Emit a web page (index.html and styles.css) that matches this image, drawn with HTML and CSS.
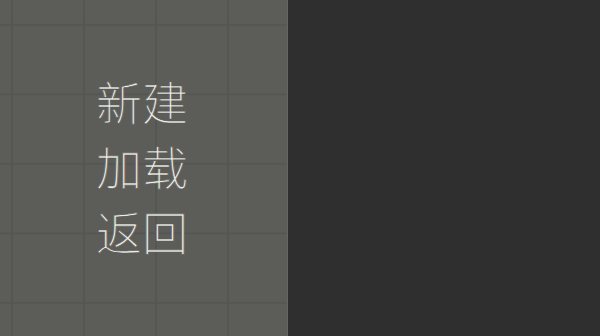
FILE: index.html
```html
<!DOCTYPE html>
<html lang="zh">
<head>
<meta charset="utf-8">
<link rel="stylesheet" href="styles.css">
</head>
<body>
<div class="screen">
  <div class="side">
    <ul class="menu">
      <li class="item">新建</li>
      <li class="item">加载</li>
      <li class="item">返回</li>
    </ul>
  </div>
  <div class="main"></div>
</div>
</body>
</html>
```
FILE: styles.css
```css
html, body {
  margin: 0;
  padding: 0;
  background: #2f2f2f;
}
.screen {
  display: flex;
  width: 600px;
  height: 336px;
  overflow: hidden;
}
.side {
  width: 288px;
  flex: none;
  background-color: #5c5c59;
  background-image:
    linear-gradient(to right, transparent 11px, #555552 11px, #555552 13px, transparent 13px),
    linear-gradient(to bottom, transparent 24px, #565653 24px, #565653 26px, transparent 26px);
  background-size: 72px 100%, 100% 69.5px;
  border-right: 1px solid #666661;
  box-sizing: border-box;
}
.menu {
  list-style: none;
  margin: 0;
  padding: 68px 0 0 96px;
  display: flex;
  flex-direction: column;
}
.item {
  font-family: "Noto Sans CJK SC", sans-serif;
  font-weight: 300;
  font-size: 46px;
  line-height: 65px;
  height: 65px;
  color: #ecece6;
  -webkit-text-stroke: 0.7px #5c5c59;
}
.main {
  flex: 1;
  background: #2f2f2f;
}
```
